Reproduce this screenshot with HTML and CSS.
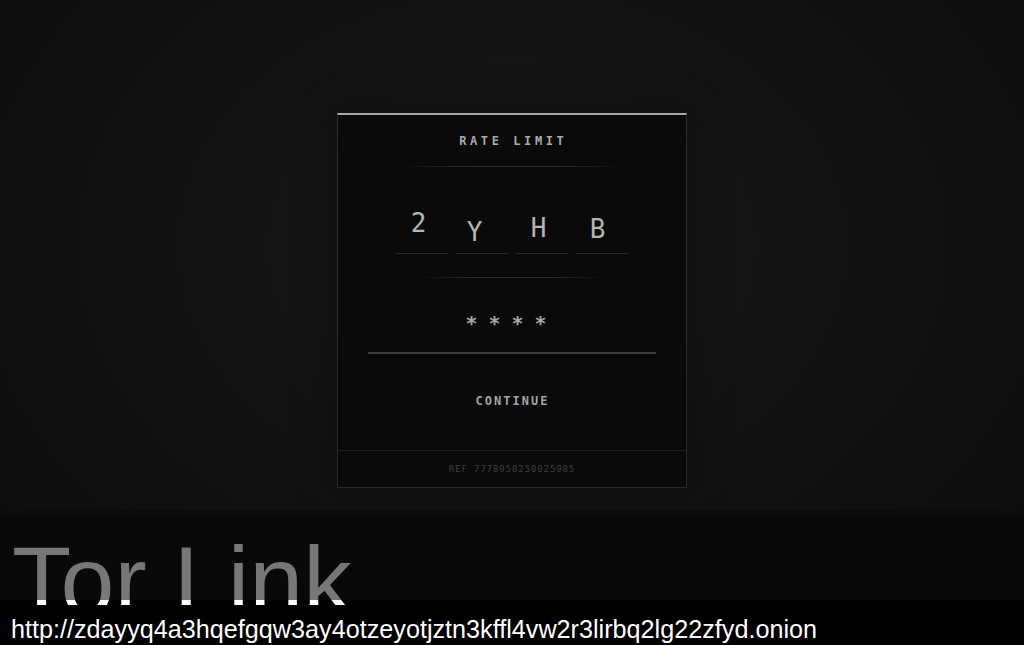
FILE: index.html
```html
<!DOCTYPE html>
<html>
<head>
<meta charset="utf-8">
<title>Rate Limit</title>
<link rel="stylesheet" href="styles.css">
</head>
<body>
<div class="page">
  <main class="stage">
    <section class="card">
      <div class="card-body">
        <h1 class="title">RATE LIMIT</h1>
        <div class="divider divider-wide"></div>
        <div class="captcha">
          <div class="cell"><span class="ch" style="transform: translate(-3px,-4px)">2</span></div>
          <div class="cell"><span class="ch" style="transform: translate(-7px,5px)">Y</span></div>
          <div class="cell"><span class="ch" style="transform: translate(-3px,1px)">H</span></div>
          <div class="cell"><span class="ch" style="transform: translate(-4px,2px)">B</span></div>
        </div>
        <div class="divider divider-narrow"></div>
        <div class="field"><span class="mask">****</span></div>
        <button class="continue" type="button">CONTINUE</button>
      </div>
      <footer class="card-foot">REF 7778958250025985</footer>
    </section>
  </main>
  <div class="bottom">
    <div class="brand"><span class="brand-text">Tor Link</span></div>
    <div class="url">http://zdayyq4a3hqefgqw3ay4otzeyotjztn3kffl4vw2r3lirbq2lg22zfyd.onion</div>
  </div>
</div>
</body>
</html>
```

FILE: styles.css
```css
* { box-sizing: border-box; }
html, body {
  margin: 0;
  padding: 0;
  height: 100%;
  background: #0c0c0c;
  overflow: hidden;
}
.page {
  height: 645px;
  display: flex;
  flex-direction: column;
  background: radial-gradient(ellipse 62% 75% at 50% 38%, #1b1b1b 0%, #141414 45%, #0d0d0d 100%);
}
.stage {
  height: 510px;
  padding-top: 113px;
  display: flex;
  justify-content: center;
  align-items: flex-start;
}
.card {
  width: 350px;
  background: #0a0a0a;
  border: 1px solid #2b2b2b;
  border-top: 2px solid #a8a8a8;
  box-shadow: 0 0 40px rgba(0,0,0,0.35);
}
.card-body {
  padding: 18px 30px 0 29px;
  display: flex;
  flex-direction: column;
  align-items: center;
}
.title {
  margin: 0;
  font-family: "DejaVu Sans Mono", monospace;
  font-weight: bold;
  font-size: 12px;
  line-height: 16px;
  letter-spacing: 3.6px;
  padding-left: 3.6px;
  color: #a9a9a9;
}
.divider {
  height: 1px;
  background: linear-gradient(to right, rgba(60,60,60,0), #2e2e2e 30%, #2e2e2e 70%, rgba(60,60,60,0));
}
.divider-wide { width: 226px; margin-top: 17px; }
.divider-narrow { width: 186px; margin-top: 23px; }
.captcha {
  display: flex;
  gap: 8px;
  margin-top: 34px;
}
.cell {
  width: 52px;
  height: 53px;
  border-bottom: 1px solid #2c2c2c;
  display: flex;
  align-items: center;
  justify-content: center;
  font-family: "DejaVu Sans Mono", monospace;
  font-size: 26px;
  color: #b4b4b4;
}
.ch { display: inline-block; }
.field {
  width: 288px;
  height: 76px;
  border-bottom: 2px solid #3d3d3d;
  display: flex;
  align-items: center;
  justify-content: center;
  padding-top: 16px;
}
.mask {
  font-family: "DejaVu Sans Mono", monospace;
  font-weight: bold;
  font-size: 20px;
  letter-spacing: 11px;
  color: #a6a6a6;
}
.continue {
  margin-top: 39px;
  margin-bottom: 41px;
  background: none;
  border: 0;
  padding: 0 0 0 2px;
  font-family: "DejaVu Sans Mono", monospace;
  font-weight: bold;
  font-size: 12px;
  line-height: 16px;
  letter-spacing: 2px;
  color: #a4a4a4;
}
.card-foot {
  border-top: 1px solid #1f1f1f;
  height: 37px;
  display: flex;
  align-items: center;
  justify-content: center;
  font-family: "DejaVu Sans Mono", monospace;
  font-size: 9px;
  letter-spacing: 0.9px;
  color: #3e3e3e;
}
.bottom {
  height: 135px;
  background: linear-gradient(to bottom, #0c0c0c 0, #090909 8px, #090909 90px, #000 90px);
}
.brand {
  height: 95px;
  overflow: hidden;
  padding: 22px 0 0 12px;
}
.brand-text {
  display: block;
  height: 73px;
  font-family: "Liberation Sans", Arial, sans-serif;
  font-size: 97px;
  line-height: 97px;
  white-space: nowrap;
  color: transparent;
  background: linear-gradient(to bottom, #777 0, #777 68px, #fff 68px);
  -webkit-background-clip: text;
  background-clip: text;
}
.url {
  height: 40px;
  padding: 9px 0 0 11px;
  font-family: "Liberation Sans", Arial, sans-serif;
  font-size: 25.2px;
  line-height: 31px;
  color: #fff;
  white-space: nowrap;
}
```
